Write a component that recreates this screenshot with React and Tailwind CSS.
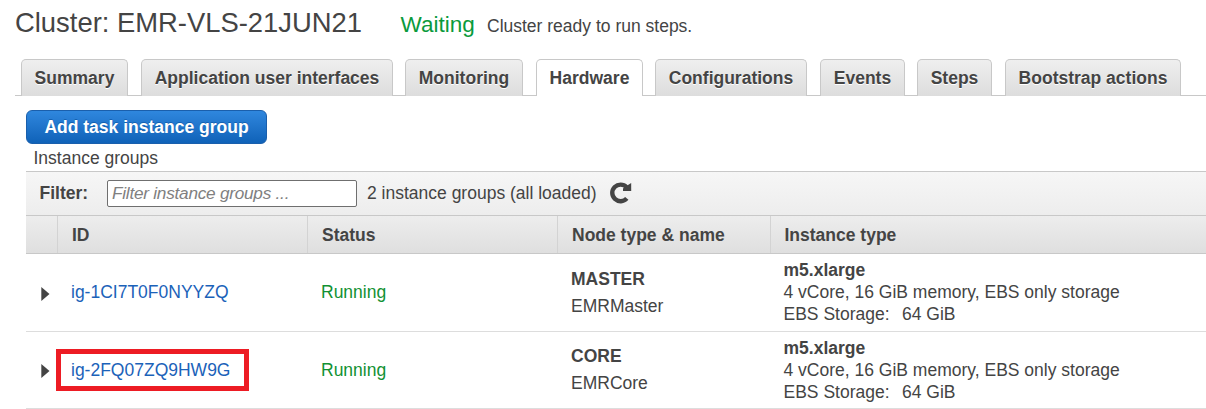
const TABS = [
  { label: 'Summary', box: 'w-[107px] mr-[13px]' },
  { label: 'Application user interfaces', box: 'w-[252px] mr-3' },
  { label: 'Monitoring', box: 'w-[118px] mr-[13px]' },
  { label: 'Hardware', box: 'w-[107px] mr-3', active: true },
  { label: 'Configurations', box: 'w-[152px] mr-[13px]' },
  { label: 'Events', box: 'w-[85px] mr-3' },
  { label: 'Steps', box: 'w-[75px] mr-[13px]' },
  { label: 'Bootstrap actions', box: 'w-[176px]' },
];

const GROUPS = [
  { id: 'ig-1CI7T0F0NYYZQ', type: 'MASTER', name: 'EMRMaster' },
  { id: 'ig-2FQ07ZQ9HW9G', type: 'CORE', name: 'EMRCore', marked: true },
];

const COLUMNS = 'grid grid-cols-[32px_250px_250px_213px_1fr]';

function Tab({ label, box, active }) {
  const look = active ? 'bg-white' : 'bg-linear-to-b from-[#efefef] to-[#dddddd]';
  return (
    <div
      className={`${box} ${look} h-[37px] shrink-0 rounded-t-[5px] border border-b-0 border-[#c8c8c8] text-center font-bold leading-[36px] [text-shadow:0_1px_0_#fff]`}
    >
      {label}
    </div>
  );
}

function HeaderCell({ children, last }) {
  return (
    <div className={`flex h-[37px] items-center pt-px font-bold ${last ? 'pl-[13.5px]' : 'border-r border-[#d3d3d3] pl-[14px]'}`}>
      {children}
    </div>
  );
}

function GroupRow({ group }) {
  return (
    <div className={`${COLUMNS} border-b border-[#dddddd] ${group.marked ? 'h-[77px]' : 'h-[78px]'}`}>
      <div className={`pl-[15px] ${group.marked ? 'pt-8' : 'pt-[33px]'}`}>
        <svg width="9" height="14" viewBox="0 0 9 14" className="block">
          <path d="M0.3 0 L8.5 7 L0.3 14 Z" fill="#444" />
        </svg>
      </div>
      <div className="relative pl-[13px] pt-[27px] leading-[22px] text-[#1b62b9]">
        {group.id}
        {group.marked && (
          <div className="absolute -left-[2px] top-[17px] h-[42px] w-[193px] border-5 border-[#ed1c24]" />
        )}
      </div>
      <div className="pl-[13px] pt-[27px] leading-[22px] text-[#119133]">Running</div>
      <div className={`pl-[13px] leading-[27px] ${group.marked ? 'pt-[11px]' : 'pt-3'}`}>
        <div className="font-bold">{group.type}</div>
        <div>{group.name}</div>
      </div>
      <div className="pl-[12.5px] pt-[5px] leading-[22px]">
        <div className="font-bold">m5.xlarge</div>
        <div>4 vCore, 16 GiB memory, EBS only storage</div>
        <div className="flex gap-[12.5px]">
          <span>EBS Storage:</span>
          <span>64 GiB</span>
        </div>
      </div>
    </div>
  );
}

export default function App() {
  return (
    <div className="h-[409px] w-[1206px] overflow-hidden whitespace-nowrap bg-white font-['Liberation_Sans',Arial,sans-serif] text-[17.5px] text-[#444]">
      <header className="flex h-[59px] items-baseline pl-[15px] pt-[5px]">
        <h1 className="w-[385.5px] text-[27.4px] leading-[36px]">Cluster: EMR-VLS-21JUN21</h1>
        <span className="w-[86.5px] text-[22.5px] text-[#0a9a3c]">Waiting</span>
        <span>Cluster ready to run steps.</span>
      </header>

      <nav className="flex h-[37px]">
        <div className="ml-[15px] w-[6px] shrink-0 border-b border-[#c8c8c8]" />
        <div className="flex flex-1 bg-[linear-gradient(#c8c8c8,#c8c8c8)] bg-[length:100%_1px] bg-bottom bg-no-repeat">
          {TABS.map((tab) => (
            <Tab key={tab.label} {...tab} />
          ))}
        </div>
      </nav>

      <main className="pl-[26px] pt-[14px]">
        <button className="block h-[34px] w-[241px] rounded-[6px] border border-[#1a5fac] bg-linear-to-b from-[#2f87de] to-[#0f62b8] text-center font-bold leading-[32px] text-white [text-shadow:0_-1px_0_#1561b0]">
          Add task instance group
        </button>
        <div className="h-[27px] pl-[7.5px] pt-[3px] leading-[22px]">Instance groups</div>

        <div className="flex h-[44px] items-center border-t border-[#c8c8c8] bg-linear-to-b from-[#f6f6f6] to-[#ededed] pl-[13.5px]">
          <label className="w-[67.5px] font-bold">Filter:</label>
          <input
            placeholder="Filter instance groups ..."
            className="h-[27px] w-[250px] rounded-[2px] border border-[#6f6f6f] bg-white px-[4px] text-[17.2px] italic tracking-[-0.24px] placeholder:text-[#808080]"
          />
          <span className="ml-[10px] w-[242px]">2 instance groups (all loaded)</span>
          <svg width="23" height="23" viewBox="0 0 23 23" className="-mt-[3px]">
            <path d="M17.8 17.4 A8.3 8.3 0 1 1 17.6 6.2" fill="none" stroke="#444" strokeWidth="4.4" />
            <path d="M22.2 1.9 V10 H14 V7.6 L19 4 Z" fill="#444" />
          </svg>
        </div>

        <div className={`${COLUMNS} h-[39px] border-y border-[#c8c8c8] bg-linear-to-b from-[#ededed] to-[#dfdfdf]`}>
          <HeaderCell />
          <HeaderCell>ID</HeaderCell>
          <HeaderCell>Status</HeaderCell>
          <HeaderCell>Node type &amp; name</HeaderCell>
          <HeaderCell last>Instance type</HeaderCell>
        </div>

        {GROUPS.map((group) => (
          <GroupRow key={group.id} group={group} />
        ))}
      </main>
    </div>
  );
}
